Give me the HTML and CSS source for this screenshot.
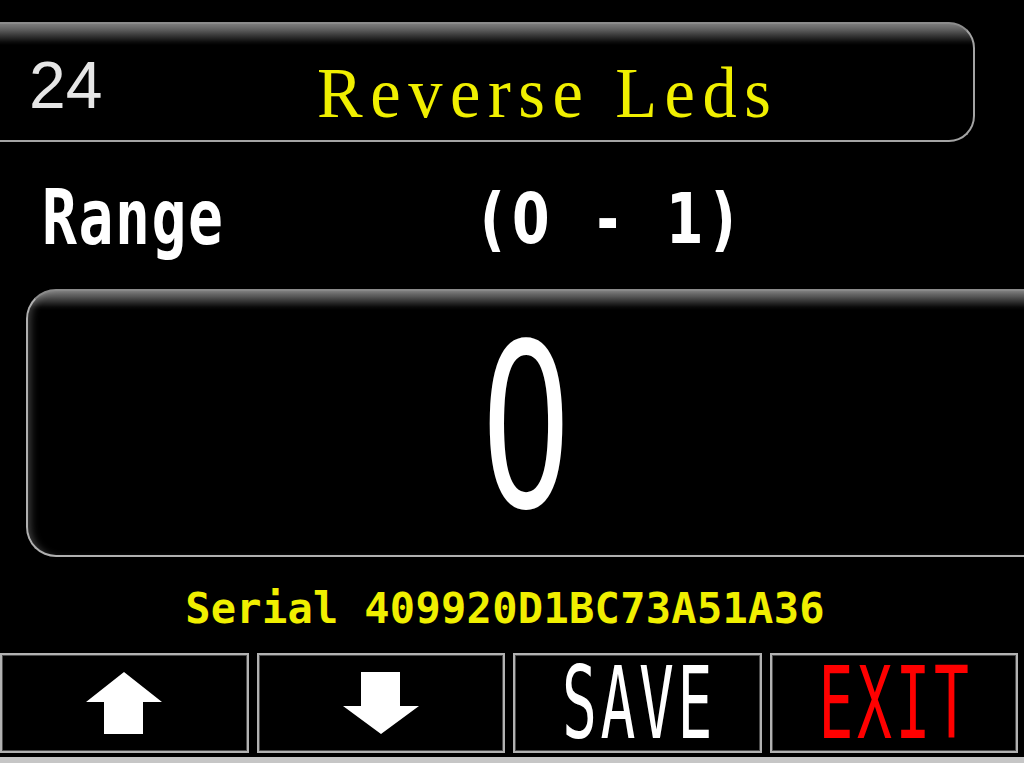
FILE: index.html
```html
<!DOCTYPE html>
<html lang="en">
<head>
<meta charset="utf-8">
<title>Reverse Leds</title>
<link rel="stylesheet" href="styles.css">
</head>
<body>
<div class="screen">
  <header class="title-bar">
    <span class="param-no">24</span>
    <span class="param-name">Reverse Leds</span>
  </header>

  <div class="range-row">
    <span class="range-label">Range</span>
    <span class="range-value"><span class="cell">(</span><span class="cell">0</span><span class="cell"> </span><span class="cell">-</span><span class="cell"> </span><span class="cell">1</span><span class="cell">)</span></span>
  </div>

  <div class="value-box">
    <span class="value">0</span>
  </div>

  <div class="serial">Serial 409920D1BC73A51A36</div>

  <nav class="keys">
    <button class="key" type="button" aria-label="Up">
      <svg class="arrow" width="76" height="62" viewBox="0 0 76 62" aria-hidden="true">
        <polygon points="38,0 76,30 57,30 57,62 18,62 18,30 0,30" fill="#fff"/>
      </svg>
    </button>
    <button class="key" type="button" aria-label="Down">
      <svg class="arrow" width="76" height="62" viewBox="0 0 76 62" aria-hidden="true">
        <polygon points="18,0 57,0 57,34 76,34 38,62 0,34 18,34" fill="#fff"/>
      </svg>
    </button>
    <button class="key" type="button"><span class="key-label save">SAVE</span></button>
    <button class="key" type="button"><span class="key-label exit">EXIT</span></button>
  </nav>

  <div class="base-strip"></div>
</div>
</body>
</html>
```

FILE: styles.css
```css
* {
  box-sizing: border-box;
}

html,
body {
  margin: 0;
  background: #000;
}

body {
  width: 1024px;
  height: 763px;
  overflow: hidden;
  font-family: "DejaVu Sans Mono", monospace;
}

.screen {
  display: flex;
  flex-direction: column;
  height: 763px;
}

/* ---- parameter title bar ---- */
.title-bar {
  flex: none;
  margin-top: 22px;
  width: 975px;
  height: 120px;
  display: flex;
  align-items: flex-start;
  padding: 28px 0 0 29px;
  border: 2px solid #a4a4a4;
  border-left: 0;
  border-top-color: #8c8c8c;
  border-radius: 0 26px 26px 0;
  background: linear-gradient(to bottom, #7c7c7c 0, #626262 5px, #343434 12px, #0c0c0c 18px, #000 21px);
}

.param-no {
  flex: none;
  width: 288px;
  font: 66px/66px "Liberation Sans", Arial, sans-serif;
  color: #e6e6e6;
}

.param-name {
  display: inline-block;
  margin-top: 5px;
  white-space: nowrap;
  font: 72px/72px "Liberation Serif", "Times New Roman", serif;
  letter-spacing: 8px;
  color: #f0ef00;
  transform: scaleX(0.95);
  transform-origin: 0 0;
}

/* ---- range line ---- */
.range-row {
  flex: none;
  height: 147px;
  display: flex;
  align-items: flex-start;
  padding: 46px 0 0 42px;
  color: #fff;
}

.range-label {
  flex: none;
  width: 431px;
  display: inline-block;
  margin-top: 7px;
  font: bold 58px/58px "DejaVu Sans Mono", monospace;
  letter-spacing: 1.6px;
  transform: scaleY(1.32);
  transform-origin: 0 49px;
}

.range-value {
  display: flex;
  margin-top: 5px;
  font: bold 54px/64px "DejaVu Sans", sans-serif;
}

.cell {
  display: inline-block;
  width: 38.5px;
  text-align: center;
  white-space: pre;
  transform: scaleY(1.28);
  transform-origin: 50% 51px;
}

/* ---- current value ---- */
.value-box {
  flex: none;
  margin-left: 26px;
  width: 998px;
  height: 268px;
  display: flex;
  align-items: center;
  justify-content: center;
  padding-top: 8px;
  border: 2px solid #b0b0b0;
  border-right: 0;
  border-top-color: #8a8a8a;
  border-radius: 30px 0 0 30px;
  background: linear-gradient(to bottom, #7a7a7a 0, #5a5a5a 5px, #2e2e2e 11px, #0a0a0a 16px, #000 19px);
  box-shadow: inset 7px 0 8px -5px rgba(255, 255, 255, 0.28);
}

.value {
  display: inline-block;
  color: #fff;
  font: 144px/144px "DejaVu Sans", sans-serif;
  transform: scaleY(1.58);
  transform-origin: 50% 70px;
}

/* ---- serial number ---- */
.serial {
  flex: none;
  height: 96px;
  padding: 31px 14px 0 0;
  text-align: center;
  white-space: pre;
  letter-spacing: 0.3px;
  color: #f0ef00;
  font: bold 42px/42px "DejaVu Sans Mono", monospace;
}

/* ---- soft keys ---- */
.keys {
  flex: none;
  height: 100px;
  display: grid;
  grid-template-columns: repeat(4, 1fr);
  gap: 8px;
  padding-right: 6px;
}

.key {
  display: flex;
  align-items: center;
  justify-content: center;
  margin: 0;
  padding: 0;
  background: #000;
  border: 2px solid #b2b2b2;
  box-shadow: inset 0 0 0 1px #4c4c4c;
  font: 58px/58px "DejaVu Sans Mono", monospace;
  letter-spacing: 3.6px;
}

.arrow {
  display: block;
}

.key-label {
  display: inline-block;
  margin-left: 3.6px;
  transform: scaleY(1.73);
  transform-origin: 50% 28px;
}

.save {
  color: #fff;
}

.exit {
  color: #ff0000;
}

.base-strip {
  flex: none;
  margin-top: 4px;
  height: 6px;
  background: #c6c6c6;
}
```
